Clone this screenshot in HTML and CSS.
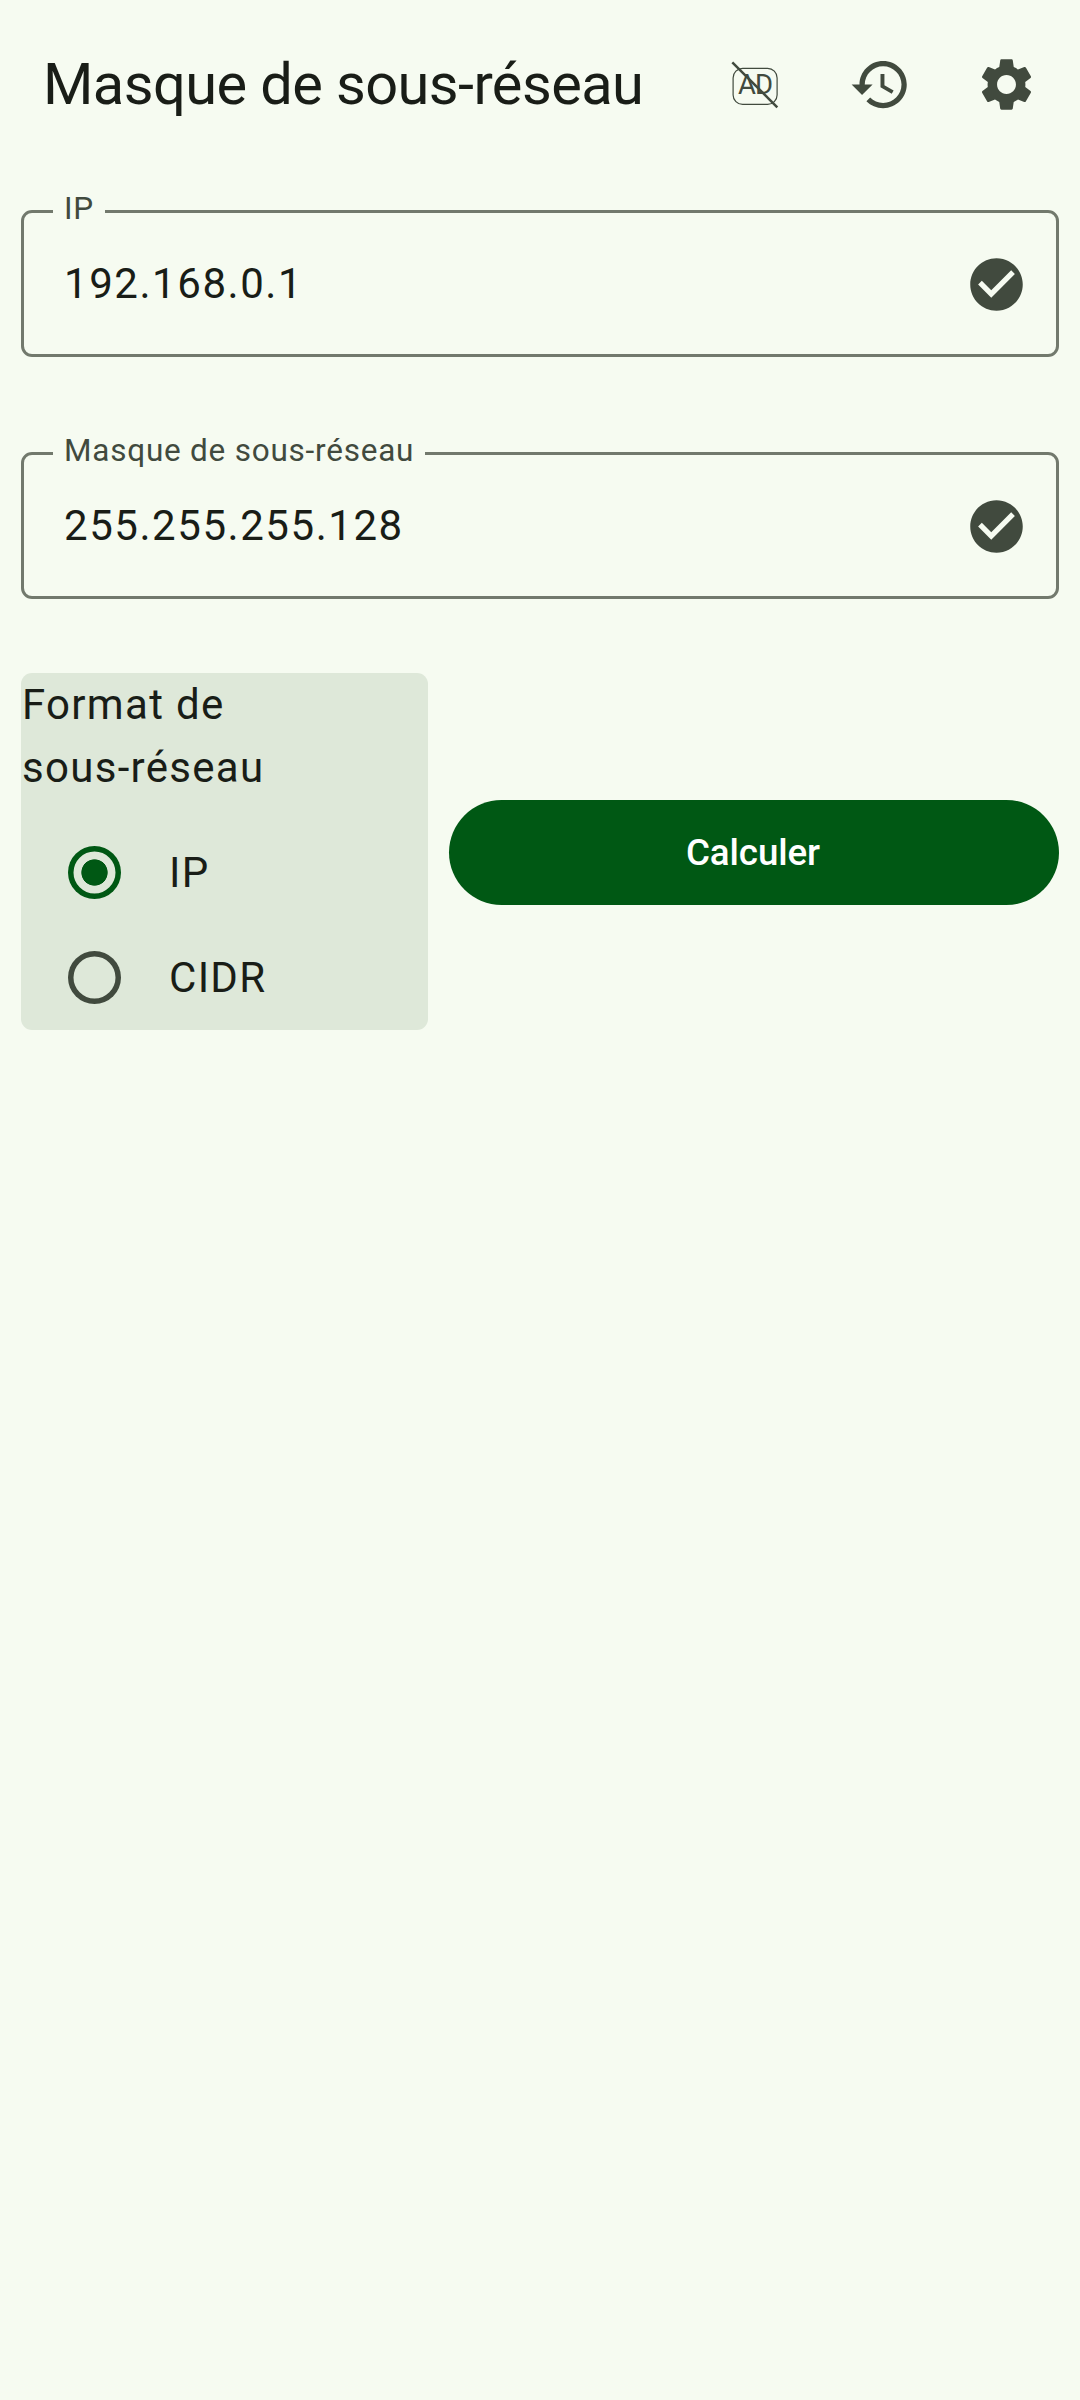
FILE: index.html
```html
<!DOCTYPE html>
<html lang="fr">
<head>
  <meta charset="UTF-8">
  <title>Masque de sous-réseau</title>
  <link rel="stylesheet" href="styles.css">
</head>
<body>

  <header class="topbar">
    <h1>Masque de sous-réseau</h1>
    <div class="action">
      <svg class="icon" viewBox="0 0 63 63">
        <rect class="ad-frame" x="10.1" y="15.4" width="44" height="36" rx="9.5"/>
        <text class="ad-text" x="15.1" y="41">AD</text>
        <path class="ad-slash" d="M9.3 9.3L54.3 54.3"/>
      </svg>
    </div>
    <div class="action">
      <svg class="icon" viewBox="0 0 24 24"><path d="M13 3c-4.97 0-9 4.03-9 9H1l3.89 3.89.07.14L9 12H6c0-3.87 3.13-7 7-7s7 3.13 7 7-3.13 7-7 7c-1.93 0-3.68-.79-4.94-2.06l-1.42 1.42C8.27 19.99 10.51 21 13 21c4.97 0 9-4.03 9-9s-4.03-9-9-9zm-1 5v5l4.28 2.54.72-1.21-3.5-2.08V8H12z"/></svg>
    </div>
    <div class="action">
      <svg class="icon" viewBox="0 0 24 24"><path d="M19.14 12.94c.04-.3.06-.61.06-.94 0-.32-.02-.64-.07-.94l2.03-1.58c.18-.14.23-.41.12-.61l-1.92-3.32c-.12-.22-.37-.29-.59-.22l-2.39.96c-.5-.38-1.03-.7-1.62-.94l-.36-2.54c-.04-.24-.24-.41-.48-.41h-3.84c-.24 0-.43.17-.47.41l-.36 2.54c-.59.24-1.13.57-1.62.94l-2.39-.96c-.22-.08-.47 0-.59.22L2.74 8.87c-.12.21-.08.47.12.61l2.03 1.58c-.05.3-.09.63-.09.94s.02.64.07.94l-2.03 1.58c-.18.14-.23.41-.12.61l1.92 3.32c.12.22.37.29.59.22l2.39-.96c.5.38 1.03.7 1.62.94l.36 2.54c.05.24.24.41.48.41h3.84c.24 0 .44-.17.47-.41l.36-2.54c.59-.24 1.13-.56 1.62-.94l2.39.96c.22.08.47 0 .59-.22l1.92-3.32c.12-.22.07-.47-.12-.61l-2.01-1.58zM12 15.6c-1.98 0-3.6-1.62-3.6-3.6s1.62-3.6 3.6-3.6 3.6 1.62 3.6 3.6-1.62 3.6-3.6 3.6z"/></svg>
    </div>
  </header>

  <main>
    <fieldset class="field">
      <legend>IP</legend>
      <div class="field-row">
        <span>192.168.0.1</span>
        <svg class="icon" viewBox="0 0 24 24"><path d="M12 2C6.48 2 2 6.48 2 12s4.48 10 10 10 10-4.48 10-10S17.52 2 12 2zm-2 15l-5-5 1.41-1.41L10 14.17l7.59-7.59L19 8l-9 9z"/></svg>
      </div>
    </fieldset>

    <fieldset class="field">
      <legend>Masque de sous-réseau</legend>
      <div class="field-row">
        <span>255.255.255.128</span>
        <svg class="icon" viewBox="0 0 24 24"><path d="M12 2C6.48 2 2 6.48 2 12s4.48 10 10 10 10-4.48 10-10S17.52 2 12 2zm-2 15l-5-5 1.41-1.41L10 14.17l7.59-7.59L19 8l-9 9z"/></svg>
      </div>
    </fieldset>

    <div class="bottom">
      <div class="format">
        <p>Format de<br>sous-réseau</p>
        <label class="option"><input type="radio" name="format" value="ip" checked> IP</label>
        <label class="option"><input type="radio" name="format" value="cidr"> CIDR</label>
      </div>
      <button class="calculate">Calculer</button>
    </div>
  </main>

</body>
</html>
```

FILE: styles.css
```css
* { box-sizing: border-box; }
body { margin: 0; min-height: 2400px; background: #f6fbf1; color: #191d17; font-family: Roboto, sans-serif; }

/* Top bar */
.topbar { display: flex; align-items: center; height: 169px; padding: 0 10.5px 0 43px; }
h1 { flex: 1; margin: 0; padding-bottom: 2px; font-size: 57.75px; font-weight: 400; line-height: 74px; letter-spacing: -0.58px; white-space: nowrap; }
.action { display: flex; justify-content: center; width: 126px; }
.icon { display: block; width: 63px; height: 63px; fill: #414a3e; }
.ad-frame { fill: none; stroke: #414a3e; stroke-width: 1.2; }
.ad-text { font-size: 27.5px; letter-spacing: -1px; }
.ad-slash { stroke: #414a3e; stroke-width: 2.5; }

main { padding: 21px 21px 0; }

/* Outlined text fields */
.field { height: 167px; margin: 0 0 75px; padding: 0 28.5px 0 29px; border: 3px solid #72796d; border-radius: 11px; }
.field legend { height: 43px; line-height: 38px; padding: 0 11px; color: #414a3e; font-size: 31.5px; letter-spacing: 0.77px; }
.field-row { display: flex; align-items: center; justify-content: space-between; height: 103px; padding-left: 11px; font-size: 42px; letter-spacing: 1.55px; }
.field-row span { padding-bottom: 2px; }

/* Format card and button */
.bottom { display: flex; align-items: center; gap: 21px; margin-top: -1px; }
.format { width: 407px; height: 357px; border-radius: 11px; background: #dee8d9; font-size: 42px; letter-spacing: 1.3px; }
.format p { margin: 0 0 21px; padding-left: 1px; line-height: 63px; }
.option { display: flex; align-items: center; gap: 48px; height: 105px; padding-left: 47px; }
.option input { appearance: none; width: 53px; height: 53px; margin: 0; border-radius: 50%; box-shadow: inset 0 0 0 5.5px #414a3e; }
.option input:checked { background: radial-gradient(circle, #005814 12.8px, transparent 13.5px); box-shadow: inset 0 0 0 5.5px #005814; }
.calculate { flex: 1; height: 105px; margin-top: 2px; padding: 0 2px 0 0; border: 0; border-radius: 53px; background: #005814; color: #fff; font: 500 36.75px Roboto, sans-serif; letter-spacing: -0.1px; }
```
